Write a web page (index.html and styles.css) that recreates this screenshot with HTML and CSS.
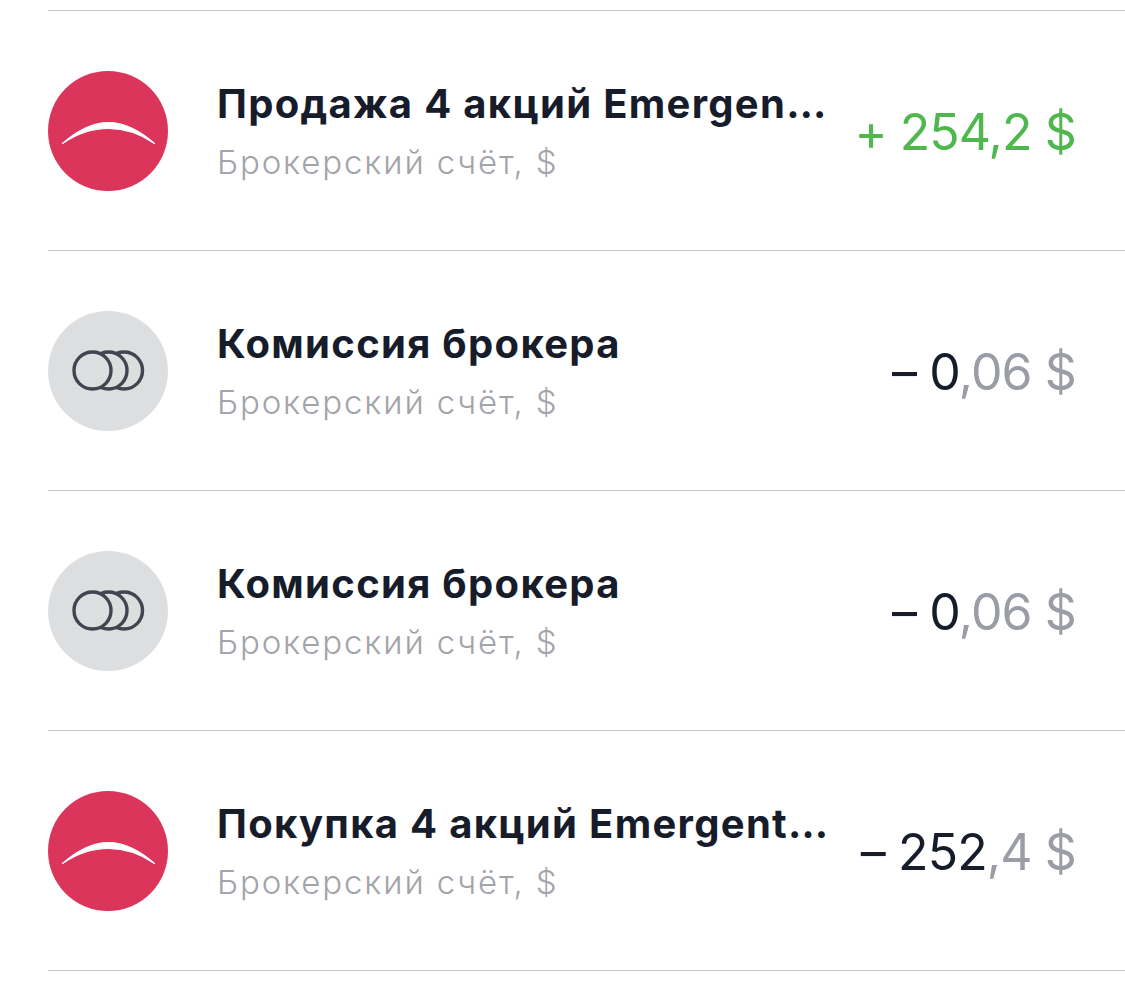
FILE: index.html
```html
<!DOCTYPE html>
<html lang="ru">
<head>
    <meta charset="utf-8">
    <title>Операции</title>
    <link rel="stylesheet" href="styles.css">
</head>
<body>
    <div class="list">
        <div class="row">
            <svg class="icon" viewBox="0 0 120 120">
                <circle cx="60" cy="60" r="60" fill="#dc355b"/>
                <path class="arc" d="M14.5 72.5 C29 59.5 45 51.5 60.5 51.5 C76 51.5 92 59.5 106.5 72.5 C91 62 76 57.5 60.5 57.5 C45 57.5 30 62 14.5 72.5 Z"/>
            </svg>
            <div class="info">
                <div class="title">Продажа 4 акций Emergen…</div>
                <div class="sub">Брокерский счёт, $</div>
            </div>
            <div class="amount plus">+ 254,2 $</div>
        </div>
        <div class="row">
            <svg class="icon" viewBox="0 0 120 120">
                <circle cx="60" cy="60" r="60" fill="#dcdee0"/>
                <g class="coins">
                    <circle cx="76" cy="59.5" r="18.5"/>
                    <circle cx="60.5" cy="59.5" r="18.5"/>
                    <circle cx="44.5" cy="59.5" r="18.5"/>
                </g>
            </svg>
            <div class="info">
                <div class="title">Комиссия брокера</div>
                <div class="sub">Брокерский счёт, $</div>
            </div>
            <div class="amount">– 0<span class="dim">,06 $</span></div>
        </div>
        <div class="row">
            <svg class="icon" viewBox="0 0 120 120">
                <circle cx="60" cy="60" r="60" fill="#dcdee0"/>
                <g class="coins">
                    <circle cx="76" cy="59.5" r="18.5"/>
                    <circle cx="60.5" cy="59.5" r="18.5"/>
                    <circle cx="44.5" cy="59.5" r="18.5"/>
                </g>
            </svg>
            <div class="info">
                <div class="title">Комиссия брокера</div>
                <div class="sub">Брокерский счёт, $</div>
            </div>
            <div class="amount">– 0<span class="dim">,06 $</span></div>
        </div>
        <div class="row">
            <svg class="icon" viewBox="0 0 120 120">
                <circle cx="60" cy="60" r="60" fill="#dc355b"/>
                <path class="arc" d="M14.5 72.5 C29 59.5 45 51.5 60.5 51.5 C76 51.5 92 59.5 106.5 72.5 C91 62 76 57.5 60.5 57.5 C45 57.5 30 62 14.5 72.5 Z"/>
            </svg>
            <div class="info">
                <div class="title">Покупка 4 акций Emergent…</div>
                <div class="sub">Брокерский счёт, $</div>
            </div>
            <div class="amount">– 252<span class="dim">,4 $</span></div>
        </div>
    </div>
</body>
</html>
```

FILE: styles.css
```css
html, body
{
    margin: 0;
    background: #fff;
}
body
{
    height: 990px;
    overflow: hidden;
    font-family: Inter, "Noto Sans", sans-serif;
}
.list
{
    margin-top: 10px;
    margin-left: 48px;
    border-bottom: 1px solid #cbcbce;
}
.row
{
    display: flex;
    align-items: center;
    height: 239px;
    border-top: 1px solid #cbcbce;
    padding-right: 49px;
}
.icon
{
    flex: none;
    width: 120px;
    height: 120px;
}
.arc
{
    fill: #fff;
    stroke: #fff;
    stroke-width: 1.2;
    stroke-linejoin: round;
}
.coins circle
{
    fill: #dcdee0;
    stroke: #42444f;
    stroke-width: 3.4;
}
.info
{
    flex: 1;
    min-width: 0;
    margin-left: 49px;
    padding-top: 2px;
}
.title
{
    font-size: 40px;
    font-weight: 700;
    letter-spacing: 1.3px;
    line-height: 46px;
    color: #171c2b;
    white-space: nowrap;
}
.sub
{
    margin-top: 15px;
    font-size: 33px;
    font-weight: 300;
    letter-spacing: 1.85px;
    line-height: 40px;
    color: #a2a4aa;
}
.amount
{
    flex: none;
    padding-top: 3px;
    font-size: 50px;
    font-weight: 400;
    letter-spacing: -0.9px;
    line-height: 60px;
    color: #171c2b;
}
.plus
{
    color: #4fb74d;
}
.dim
{
    color: #9b9da6;
}
```
